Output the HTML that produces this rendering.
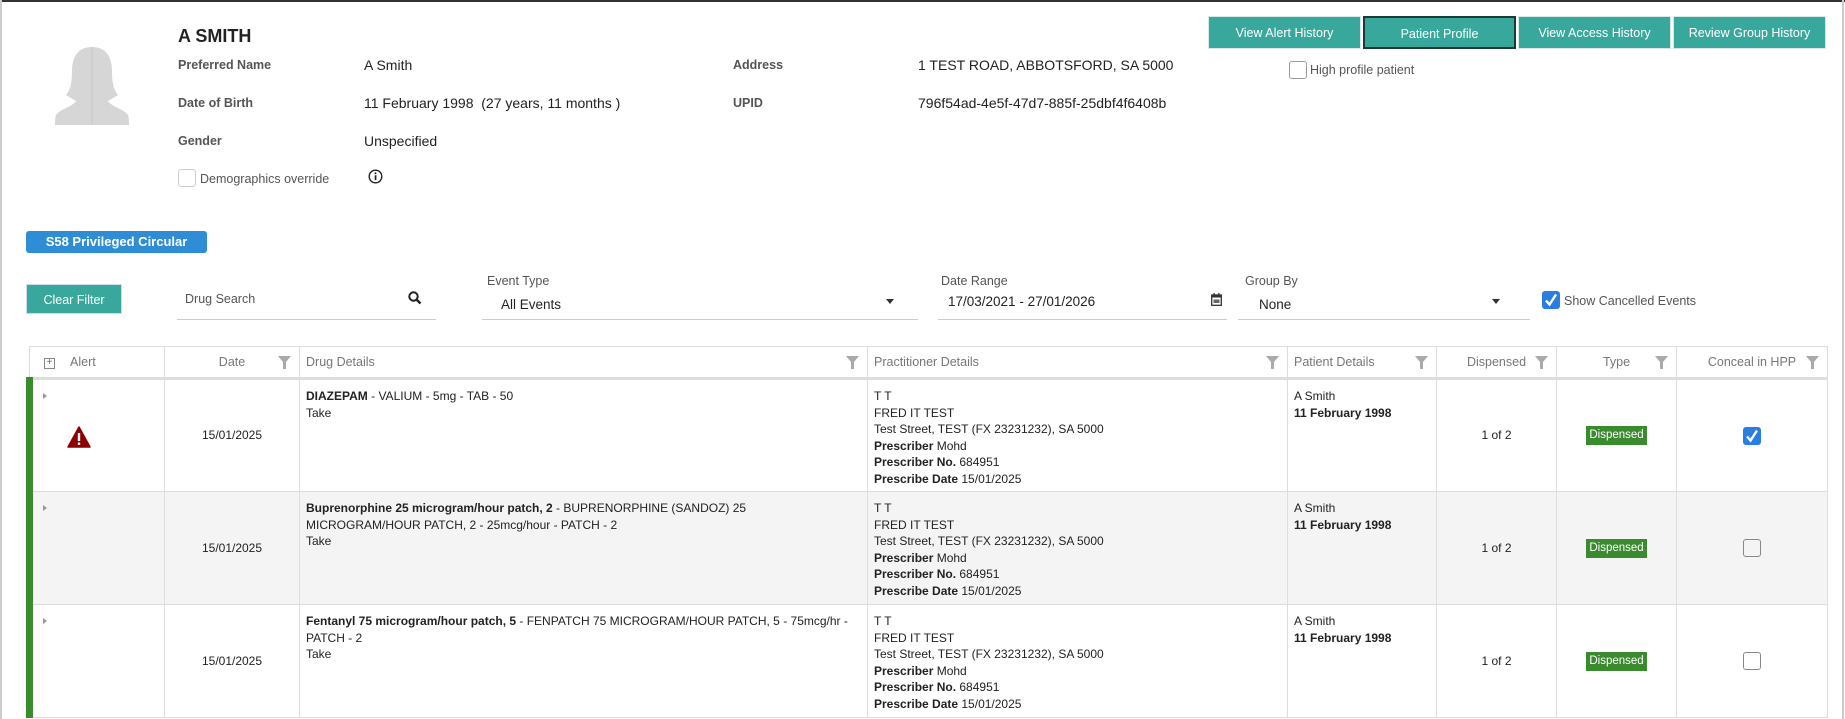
<!DOCTYPE html>
<html><head><meta charset="utf-8"><style>
*{box-sizing:border-box;margin:0;padding:0}
body{width:1845px;height:719px;overflow:hidden;background:#fff;font-family:"Liberation Sans",Arial,sans-serif;color:#222;position:relative}
.a{position:absolute;white-space:nowrap}
.lbl{font-size:12.5px;color:#555;font-weight:bold}
.val{font-size:14px;color:#222}
.btn{position:absolute;top:16px;height:33px;width:153px;background:#38a89d;color:#fff;font-size:12.5px;text-align:center;line-height:33px;border:1px solid #d6e9e6}
.cb{position:absolute;width:18px;height:18px;border:1.5px solid #999;border-radius:3px;background:#fff}
.cbon{position:absolute;width:18px;height:18px;border-radius:3px;background:#2a7de1}
.flbl{font-size:12.5px;color:#555}
.line{position:absolute;height:1px;background:#ccc}
table{position:absolute;left:26px;top:346px;width:1801px;border-collapse:collapse;font-size:12px;table-layout:fixed}
th{height:32px;font-weight:normal;color:#777;font-size:12.5px;border:1px solid #ddd;border-bottom:3px solid #ddd;position:relative;text-align:center}
td{border:1px solid #ddd;vertical-align:top;padding:8px 6px 0;line-height:16.5px;color:#222}
tr.r{height:113px}
tr.g td{background:#f4f4f4}
.mid{vertical-align:middle;text-align:center;padding:0}
.fil{position:absolute;right:8px;top:9px;width:13px;height:13px}
.disp{display:inline-block;background:#3a8a2e;color:#fff;font-size:11.5px;padding:0 3px;line-height:19px}
.chk{display:inline-block;width:18px;height:18px;border:1.5px solid #888;border-radius:3px;vertical-align:middle}
</style></head><body>
<div class="a" style="left:0;top:0;width:1845px;height:2px;background:#333"></div>
<div class="a" style="left:0;top:0;width:2px;height:719px;background:#ccc"></div>
<div class="a" style="left:1842px;top:0;width:2px;height:719px;background:#ccc"></div>

<svg class="a" style="left:55px;top:47px" width="74" height="78" viewBox="0 0 74 78"><path d="M37 0c-14 0-20 10-20 24 0 10-1 18-6 24l10 6c-4 6-16 8-20 14-1 3-1 6-1 10h74c0-4 0-7-1-10-4-6-16-8-20-14l10-6c-5-6-6-14-6-24C57 10 51 0 37 0z" fill="#d6d6d6"/><line x1="37" y1="0" x2="37" y2="78" stroke="#c8c8c8"/></svg>

<div class="a" style="left:178px;top:26px;font-size:18px;font-weight:bold;color:#222">A SMITH</div>
<div class="a lbl" style="left:178px;top:58px">Preferred Name</div>
<div class="a val" style="left:364px;top:57px">A Smith</div>
<div class="a lbl" style="left:178px;top:96px">Date of Birth</div>
<div class="a val" style="left:364px;top:95px">11 February 1998&nbsp; (27 years, 11 months )</div>
<div class="a lbl" style="left:178px;top:134px">Gender</div>
<div class="a val" style="left:364px;top:133px">Unspecified</div>
<div class="cb" style="left:178px;top:169px;border-color:#ccc"></div>
<div class="a lbl" style="left:200px;top:172px;font-weight:normal">Demographics override</div>
<svg class="a" style="left:368px;top:169px" width="15" height="15" viewBox="0 0 15 15"><circle cx="7.5" cy="7.5" r="6.3" fill="none" stroke="#222" stroke-width="1.4"/><rect x="6.7" y="6.3" width="1.7" height="4.8" fill="#222"/><circle cx="7.5" cy="4.3" r="1" fill="#222"/></svg>
<div class="a lbl" style="left:733px;top:58px">Address</div>
<div class="a val" style="left:918px;top:57px">1 TEST ROAD, ABBOTSFORD, SA 5000</div>
<div class="a lbl" style="left:733px;top:96px">UPID</div>
<div class="a val" style="left:918px;top:95px">796f54ad-4e5f-47d7-885f-25dbf4f6408b</div>

<div class="btn" style="left:1208px">View Alert History</div>
<div class="btn" style="left:1363px;border:2px solid #1a3a36">Patient Profile</div>
<div class="btn" style="left:1518px">View Access History</div>
<div class="btn" style="left:1673px">Review Group History</div>
<div class="cb" style="left:1289px;top:61px"></div>
<div class="a flbl" style="left:1310px;top:63px">High profile patient</div>

<div class="a" style="left:26px;top:231px;width:181px;height:22px;background:#2f8dd6;border-radius:3px;color:#fff;font-weight:bold;font-size:13px;text-align:center;line-height:22px">S58 Privileged Circular</div>

<div class="a" style="left:26px;top:284px;width:96px;height:30px;background:#38a89d;color:#fff;font-size:12.5px;text-align:center;line-height:30px;border:1px solid #cde">Clear Filter</div>
<div class="a flbl" style="left:185px;top:292px">Drug Search</div>
<svg class="a" style="left:408px;top:291px" width="14" height="14" viewBox="0 0 14 14"><circle cx="5.5" cy="5.5" r="4.2" fill="none" stroke="#222" stroke-width="2"/><line x1="8.6" y1="8.6" x2="12.5" y2="12.5" stroke="#222" stroke-width="2.4"/></svg>
<div class="line" style="left:177px;top:319px;width:259px"></div>
<div class="a flbl" style="left:487px;top:274px">Event Type</div>
<div class="a val" style="left:501px;top:297px;font-size:13.5px">All Events</div>
<div class="a" style="left:886px;top:299px;border:4px solid transparent;border-top:5px solid #333"></div>
<div class="line" style="left:482px;top:319px;width:436px"></div>
<div class="a flbl" style="left:941px;top:274px">Date Range</div>
<div class="a val" style="left:948px;top:294px;font-size:13.5px">17/03/2021 - 27/01/2026</div>
<svg class="a" style="left:1211px;top:293px" width="11" height="13" viewBox="0 0 11 13"><rect x="0.7" y="2" width="9.6" height="10.3" fill="none" stroke="#333" stroke-width="1.3"/><rect x="0.7" y="2" width="9.6" height="2.5" fill="#333"/><rect x="2.5" y="0" width="1.3" height="3" fill="#333"/><rect x="7.2" y="0" width="1.3" height="3" fill="#333"/><rect x="2.5" y="6.5" width="6" height="3.5" fill="#666"/></svg>
<div class="line" style="left:938px;top:319px;width:289px"></div>
<div class="a flbl" style="left:1245px;top:274px">Group By</div>
<div class="a val" style="left:1259px;top:297px;font-size:13.5px">None</div>
<div class="a" style="left:1492px;top:299px;border:4px solid transparent;border-top:5px solid #333"></div>
<div class="line" style="left:1238px;top:319px;width:292px"></div>
<div class="cbon" style="left:1542px;top:291px"><svg width="18" height="18" viewBox="0 0 18 18"><path d="M4 9.5l3.5 4L14 3.5" fill="none" stroke="#fff" stroke-width="2.4"/></svg></div>
<div class="a flbl" style="left:1564px;top:294px">Show Cancelled Events</div>

<table>
<colgroup><col style="width:135px"><col style="width:135px"><col style="width:568px"><col style="width:420px"><col style="width:149px"><col style="width:120px"><col style="width:120px"><col style="width:151px"></colgroup>
<tr><th style="text-align:left;padding-left:40px"><span style="position:absolute;left:14px;top:11px;width:11px;height:11px;border:1px solid #888;font-size:10px;line-height:8px;text-align:center;color:#666">+</span>Alert</th>
<th>Date<svg class="fil" viewBox="0 0 13 13"><path d="M0 0h13L8 6v7H5V6z" fill="#aaa"/></svg></th>
<th style="text-align:left;padding-left:6px">Drug Details<svg class="fil" viewBox="0 0 13 13"><path d="M0 0h13L8 6v7H5V6z" fill="#aaa"/></svg></th>
<th style="text-align:left;padding-left:6px">Practitioner Details<svg class="fil" viewBox="0 0 13 13"><path d="M0 0h13L8 6v7H5V6z" fill="#aaa"/></svg></th>
<th style="text-align:left;padding-left:6px">Patient Details<svg class="fil" viewBox="0 0 13 13"><path d="M0 0h13L8 6v7H5V6z" fill="#aaa"/></svg></th>
<th>Dispensed<svg class="fil" viewBox="0 0 13 13"><path d="M0 0h13L8 6v7H5V6z" fill="#aaa"/></svg></th>
<th>Type<svg class="fil" viewBox="0 0 13 13"><path d="M0 0h13L8 6v7H5V6z" fill="#aaa"/></svg></th>
<th>Conceal in HPP<svg class="fil" viewBox="0 0 13 13"><path d="M0 0h13L8 6v7H5V6z" fill="#aaa"/></svg></th></tr>

<tr class="r"><td style="border-left:7px solid #3a8a2e;position:relative"><span style="position:absolute;left:10px;top:13px;border:3px solid transparent;border-left:4px solid #999"></span><svg style="position:absolute;left:34px;top:46px" width="24" height="22" viewBox="0 0 24 22"><path d="M12 1L23 21H1z" fill="#8b0000" stroke="#8b0000" stroke-linejoin="round" stroke-width="1.5"/><rect x="10.8" y="7" width="2.4" height="8" fill="#fff"/><rect x="10.8" y="16.5" width="2.4" height="2.4" fill="#fff"/></svg></td>
<td class="mid">15/01/2025</td>
<td><b>DIAZEPAM</b> - VALIUM - 5mg - TAB - 50<br>Take</td>
<td>T T<br>FRED IT TEST<br>Test Street, TEST (FX 23231232), SA 5000<br><b>Prescriber</b> Mohd<br><b>Prescriber No.</b> 684951<br><b>Prescribe Date</b> 15/01/2025</td>
<td>A Smith<br><b>11 February 1998</b></td>
<td class="mid">1 of 2</td>
<td class="mid"><span class="disp">Dispensed</span></td>
<td class="mid"><span class="chk" style="background:#2a7de1;border:none;position:relative"><svg width="18" height="18" viewBox="0 0 18 18" style="position:absolute;left:0;top:0"><path d="M4 9.5l3.5 4L14 3.5" fill="none" stroke="#fff" stroke-width="2.4"/></svg></span></td></tr>

<tr class="r g"><td style="border-left:7px solid #3a8a2e;position:relative"><span style="position:absolute;left:10px;top:13px;border:3px solid transparent;border-left:4px solid #999"></span></td>
<td class="mid">15/01/2025</td>
<td><b>Buprenorphine 25 microgram/hour patch, 2</b> - BUPRENORPHINE (SANDOZ) 25<br>MICROGRAM/HOUR PATCH, 2 - 25mcg/hour - PATCH - 2<br>Take</td>
<td>T T<br>FRED IT TEST<br>Test Street, TEST (FX 23231232), SA 5000<br><b>Prescriber</b> Mohd<br><b>Prescriber No.</b> 684951<br><b>Prescribe Date</b> 15/01/2025</td>
<td>A Smith<br><b>11 February 1998</b></td>
<td class="mid">1 of 2</td>
<td class="mid"><span class="disp">Dispensed</span></td>
<td class="mid"><span class="chk"></span></td></tr>

<tr class="r"><td style="border-left:7px solid #3a8a2e;position:relative"><span style="position:absolute;left:10px;top:13px;border:3px solid transparent;border-left:4px solid #999"></span></td>
<td class="mid">15/01/2025</td>
<td><b>Fentanyl 75 microgram/hour patch, 5</b> - FENPATCH 75 MICROGRAM/HOUR PATCH, 5 - 75mcg/hr -<br>PATCH - 2<br>Take</td>
<td>T T<br>FRED IT TEST<br>Test Street, TEST (FX 23231232), SA 5000<br><b>Prescriber</b> Mohd<br><b>Prescriber No.</b> 684951<br><b>Prescribe Date</b> 15/01/2025</td>
<td>A Smith<br><b>11 February 1998</b></td>
<td class="mid">1 of 2</td>
<td class="mid"><span class="disp">Dispensed</span></td>
<td class="mid"><span class="chk"></span></td></tr>
</table>
</body></html>
